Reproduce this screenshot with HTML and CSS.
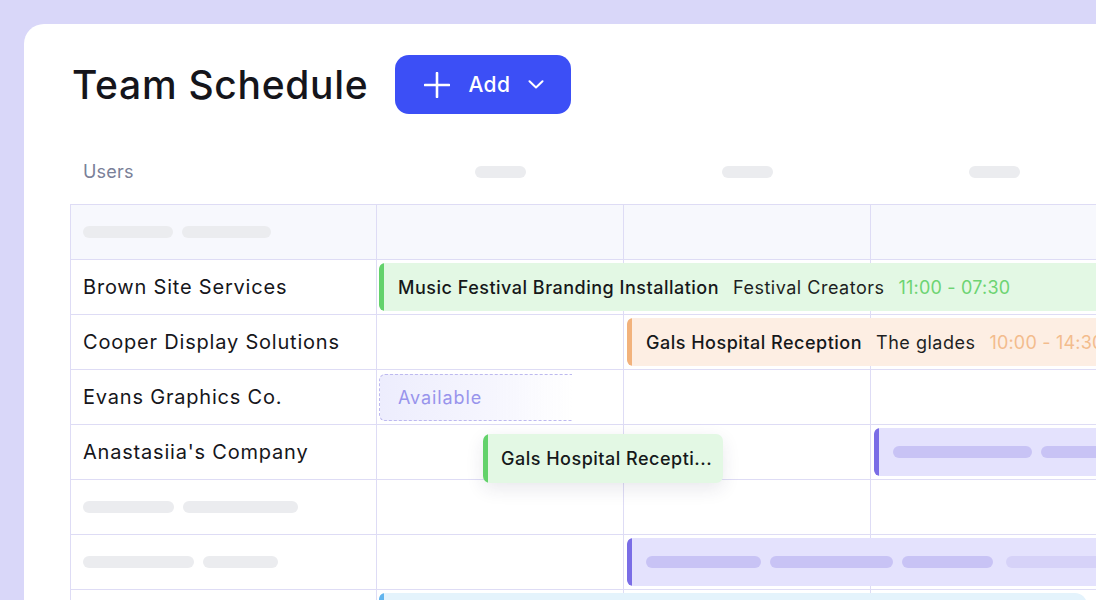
FILE: index.html
```html
<!DOCTYPE html>
<html lang="en">
<head>
<meta charset="utf-8">
<title>Team Schedule</title>
<link rel="stylesheet" href="styles.css">
</head>
<body>
<div class="card">
  <div class="titlebar">
    <h1 class="title">Team Schedule</h1>
    <button class="add-btn" type="button">
      <svg class="plus" width="26" height="26" viewBox="0 0 26 26"><path d="M13 1v24M1 13h24" stroke="#fff" stroke-width="2.6" stroke-linecap="round" fill="none"/></svg>
      <span class="add-label">Add</span>
      <svg class="chev" width="16" height="9" viewBox="0 0 16 9"><path d="M1.5 1.2l6.5 6.3 6.5-6.3" stroke="#fff" stroke-width="2" stroke-linecap="round" stroke-linejoin="round" fill="none"/></svg>
    </button>
  </div>

  <div class="colhead">
    <div class="users-label">Users</div>
    <div class="tick"><span class="pill time-pill"></span></div>
    <div class="tick"><span class="pill time-pill"></span></div>
    <div class="tick"><span class="pill time-pill"></span></div>
    <div class="tick"><span class="pill time-pill"></span></div>
  </div>

  <div class="table">
    <div class="row row-head">
      <div class="cell name"><span class="pill sk" style="width:90px"></span><span class="pill sk" style="width:89px"></span></div>
      <div class="cell"></div><div class="cell"></div><div class="cell"></div><div class="cell"></div>
    </div>

    <div class="row">
      <div class="cell name">Brown Site Services</div>
      <div class="cell"></div><div class="cell"></div><div class="cell"></div><div class="cell"></div>
      <div class="event green from-2">
        <span class="ev-title">Music Festival Branding Installation</span>
        <span class="ev-client">Festival Creators</span>
        <span class="ev-time">11:00 - 07:30</span>
      </div>
    </div>

    <div class="row">
      <div class="cell name">Cooper Display Solutions</div>
      <div class="cell"></div><div class="cell"></div><div class="cell"></div><div class="cell"></div>
      <div class="event orange from-3">
        <span class="ev-title">Gals Hospital Reception</span>
        <span class="ev-client">The glades</span>
        <span class="ev-time">10:00 - 14:30</span>
      </div>
    </div>

    <div class="row">
      <div class="cell name">Evans Graphics Co.</div>
      <div class="cell"></div><div class="cell"></div><div class="cell"></div><div class="cell"></div>
      <div class="available">Available</div>
    </div>

    <div class="row">
      <div class="cell name">Anastasiia's Company</div>
      <div class="cell"></div><div class="cell"></div><div class="cell"></div><div class="cell"></div>
      <div class="event purple from-4">
        <span class="pill ev-pill" style="width:139px"></span>
        <span class="pill ev-pill" style="width:139px"></span>
      </div>
      <div class="drag-card">
        <span class="ev-title">Gals Hospital Recepti...</span>
      </div>
    </div>

    <div class="row">
      <div class="cell name"><span class="pill sk" style="width:91px"></span><span class="pill sk" style="width:115px"></span></div>
      <div class="cell"></div><div class="cell"></div><div class="cell"></div><div class="cell"></div>
    </div>

    <div class="row">
      <div class="cell name"><span class="pill sk" style="width:111px"></span><span class="pill sk" style="width:75px"></span></div>
      <div class="cell"></div><div class="cell"></div><div class="cell"></div><div class="cell"></div>
      <div class="event purple from-3">
        <span class="pill ev-pill" style="width:115px"></span>
        <span class="pill ev-pill" style="width:123px"></span>
        <span class="pill ev-pill" style="width:91px"></span>
        <span class="pill ev-pill faded" style="width:120px"></span>
      </div>
    </div>

    <div class="row">
      <div class="cell name"></div>
      <div class="cell"></div><div class="cell"></div><div class="cell"></div><div class="cell"></div>
      <div class="event blue from-2 short"></div>
    </div>
  </div>
</div>
</body>
</html>
```

FILE: styles.css
```css
* { box-sizing: border-box; }

html, body {
  margin: 0;
  padding: 0;
  width: 1096px;
  height: 600px;
  overflow: hidden;
  background: #d9d7f9;
  font-family: Inter, "Liberation Sans", sans-serif;
  color: #17171c;
}

.card {
  margin: 24px 0 0 24px;
  width: 1072px;
  height: 576px;
  overflow: hidden;
  background: #ffffff;
  border-radius: 20px 0 0 0;
  padding: 31px 0 0 46px;
}

.titlebar {
  display: flex;
  align-items: center;
  gap: 27px;
  height: 59px;
}

.title {
  margin: 0 0 0 2px;
  font-size: 39px;
  font-weight: 500;
  letter-spacing: 0.7px;
  color: #15151b;
  white-space: nowrap;
}

.add-btn {
  display: flex;
  align-items: center;
  flex: none;
  height: 59px;
  width: 176px;
  padding: 0 0 0 29px;
  border: none;
  border-radius: 14px;
  background: #3c4ff6;
  color: #fff;
  font-family: inherit;
  font-size: 21px;
  font-weight: 500;
  letter-spacing: 0.5px;
}
.add-btn .plus { flex: none; }
.add-label { margin-left: 18px; }
.chev { margin-left: 17px; flex: none; }

.colhead {
  display: grid;
  grid-template-columns: 307px repeat(4, 247px);
  height: 90px;
  align-items: end;
  padding-bottom: 22px;
}
.users-label {
  padding-left: 13px;
  font-size: 18px;
  letter-spacing: 0.2px;
  color: #7a8098;
  line-height: 20px;
}
.tick {
  display: flex;
  justify-content: center;
  align-items: center;
  height: 20px;
}

.pill {
  display: inline-block;
  height: 12px;
  border-radius: 6px;
}
.time-pill { width: 51px; background: #ebecef; }
.sk { background: #ebecef; }

.table {
  border-left: 1px solid #dedcf5;
  border-top: 1px solid #dedcf5;
}

.row {
  display: grid;
  grid-template-columns: 306px repeat(4, 247px);
  grid-template-rows: 55px;
  position: relative;
}

.cell {
  grid-row: 1;
  border-right: 1px solid #dedcf5;
  border-bottom: 1px solid #dedcf5;
}
.cell:nth-child(1) { grid-column: 1; }
.cell:nth-child(2) { grid-column: 2; }
.cell:nth-child(3) { grid-column: 3; }
.cell:nth-child(4) { grid-column: 4; }
.cell:nth-child(5) { grid-column: 5; }
.row-head .cell { background: #f7f8fd; }

.name {
  display: flex;
  align-items: center;
  gap: 9px;
  padding-left: 12px;
  font-size: 20px;
  letter-spacing: 0.8px;
  color: #16161b;
  white-space: nowrap;
}

.event {
  grid-row: 1;
  margin: 3px 0 4px 2px;
  border-radius: 6px;
  display: flex;
  align-items: center;
  padding-left: 19px;
  white-space: nowrap;
  overflow: hidden;
  font-size: 18px;
  letter-spacing: 0.5px;
  position: relative;
}
.event::before {
  content: "";
  position: absolute;
  left: 0; top: 0; bottom: 0;
  width: 5px;
  border-radius: 6px 0 0 6px;
}
.from-2 { grid-column: 2 / -1; }
.from-3 { grid-column: 3 / -1; margin-left: 3px; }
.from-4 { grid-column: 4 / -1; margin-left: 3px; }
.short { margin-right: 278px; border-radius: 6px 12px 0 0; }

.ev-title { font-weight: 500; color: #16181a; }
.ev-client { margin-left: 14px; color: #1d1f22; }
.ev-time { margin-left: 14px; letter-spacing: 0.2px; }

.green { background: #e3f8e4; }
.green::before { background: #63d26b; }
.green .ev-time { color: #6dd472; }

.orange { background: #fdeee3; }
.orange::before { background: #f2b27c; }
.orange .ev-time { color: #f3bc8d; }

.purple { background: #e4e2fd; gap: 9px; }
.purple::before { background: #7a6de6; }
.ev-pill { background: #c8c3f5; flex: none; }
.ev-pill.faded { background: #d6d2f8; margin-left: 4px; }

.blue { background: #e4f3fc; }
.blue::before { background: #62b5ee; }

.available {
  grid-row: 1;
  grid-column: 2 / 3;
  margin: 4px 52px 4px 2px;
  border: 1.5px dashed #bdb9ef;
  border-right: none;
  border-radius: 6px 0 0 6px;
  background: linear-gradient(90deg, #ededfd 0%, #f6f6fe 60%, rgba(255,255,255,0) 100%);
  display: flex;
  align-items: center;
  padding-left: 18px;
  font-size: 18px;
  letter-spacing: 0.9px;
  color: #9894ec;
}

.drag-card {
  position: absolute;
  left: 412px;
  top: 9px;
  width: 240px;
  height: 49px;
  background: #e3f8e4;
  border-radius: 7px;
  box-shadow: 0 6px 18px rgba(40, 40, 80, 0.10);
  display: flex;
  align-items: center;
  padding-left: 18px;
  font-size: 18px;
  letter-spacing: 0.5px;
  overflow: hidden;
  white-space: nowrap;
  z-index: 2;
}
.drag-card::before {
  content: "";
  position: absolute;
  left: 0; top: 0; bottom: 0;
  width: 5px;
  background: #63d26b;
  border-radius: 7px 0 0 7px;
}
```
